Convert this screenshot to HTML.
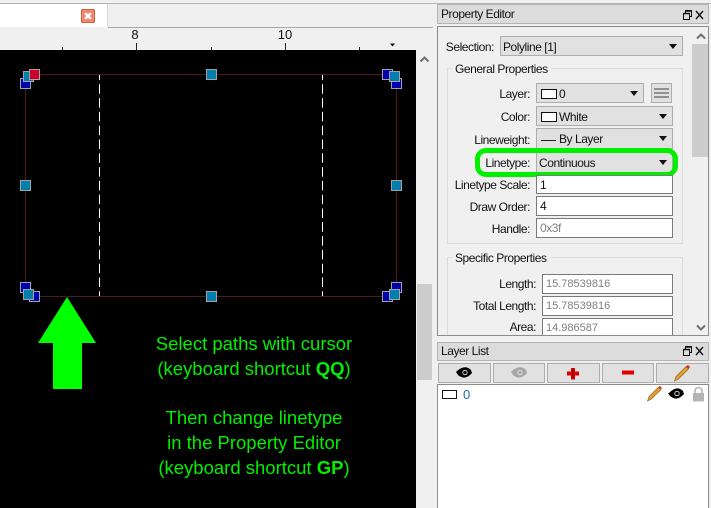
<!DOCTYPE html>
<html><head><meta charset="utf-8">
<style>
html,body{margin:0;padding:0;background:#f0f0f0;}
#r{position:relative;width:711px;height:508px;overflow:hidden;background:#f0f0f0;font-family:"Liberation Sans",sans-serif;font-size:12px;color:#111;letter-spacing:-.45px;}
#r div{position:absolute;box-sizing:border-box;white-space:nowrap;}
.lb{text-align:right;line-height:16px;height:16px;}
.cb{background:#e1e1e1;border:1px solid #adadad;line-height:20px;padding-left:2px;}
.cb:after{content:"";position:absolute;right:5px;top:7px;border-style:solid;border-color:#111 transparent transparent transparent;border-width:5px 4px 0 4px;}
.in{background:#fff;border:1px solid #7a7a7a;line-height:18px;padding-left:3px;}
.dis{color:#808080;}
.num{font-size:11px;letter-spacing:0;}
.sw{display:inline-block;width:14px;height:8px;border:1px solid #111;background:#fff;vertical-align:-1px;margin:0 2px 0 2px;box-sizing:content-box;}
.g{color:#00f000;font-size:18.5px;letter-spacing:0;line-height:25px;text-align:center;left:130px;width:248px;height:25px;}
.tb{top:363px;height:20px;background:#e1e1e1;border:1px solid #adadad;}
.grp{border:1px solid #dcdcdc;}
.gl{background:#f0f0f0;padding:0 3px;line-height:14px;}
</style></head><body>
<div id="r">
<div style="left:0;top:3px;width:711px;height:1px;background:#b4b4b4"></div>
<div style="left:0;top:4px;width:108px;height:23px;background:#fff;border-right:1px solid #d8d8d8"></div>
<div style="left:108px;top:27px;width:325px;height:1px;background:#a8a8a8"></div>
<svg style="position:absolute;left:81px;top:9px" width="14" height="14" viewBox="0 0 14 14"><rect x=".5" y=".5" width="13" height="13" rx="1" fill="#ec8a6e" stroke="#d9603f"/><path d="M4.200 4.200 9.800 9.800M9.800 4.200 4.200 9.800" stroke="#fff" stroke-width="2.400"/></svg>
<div style="left:125px;top:27px;width:20px;height:16px;text-align:center;font-size:13px;line-height:16px;letter-spacing:0">8</div>
<div style="left:270px;top:27px;width:30px;height:16px;text-align:center;font-size:13px;line-height:16px;letter-spacing:0">10</div>
<div style="left:0;top:50px;width:416px;height:458px;background:#000"></div>
<svg style="position:absolute;left:0;top:0" width="417" height="508">
<path d="M62.500 47V50M136.500 43V50M211.500 47V50M285.500 43V50M359.500 47V50" stroke="#222" fill="none"/>
<path d="M390 43.500h5l-2.500 3z" fill="#111"/>
<rect x="25.500" y="74.500" width="371" height="222" fill="none" stroke="#521a1e"/>
<path d="M99.500 75V296M322.500 75V296" stroke="#fff" stroke-dasharray="9.500 4.300" stroke-dashoffset="4.500" fill="none"/>
<path d="M67 297 96 343H82V389H53V343H38Z" fill="#00ff00"/>
<g stroke="#a3a3a3" stroke-width="1">
<g fill="#0000b0">
<rect x="20.500" y="78.500" width="10" height="10"/>
<rect x="382.500" y="69.500" width="10" height="10"/>
<rect x="391.500" y="78.500" width="10" height="10"/>
<rect x="20.500" y="282.500" width="10" height="10"/>
<rect x="29.500" y="291.500" width="10" height="10"/>
<rect x="382.500" y="291.500" width="10" height="10"/>
<rect x="391.500" y="282.500" width="10" height="10"/>
</g>
<g fill="#007fae">
<rect x="206.500" y="69.500" width="10" height="10"/>
<rect x="20.500" y="180.500" width="10" height="10"/>
<rect x="391.500" y="180.500" width="10" height="10"/>
<rect x="206.500" y="291.500" width="10" height="10"/>
<rect x="23.500" y="71.500" width="10" height="10"/>
<rect x="389.500" y="71.500" width="10" height="10"/>
<rect x="23.500" y="289.500" width="10" height="10"/>
<rect x="389.500" y="289.500" width="10" height="10"/>
</g>
<rect x="29.500" y="69.500" width="10" height="10" fill="#c8002c"/>
</g>
</svg>
<div class="g" style="top:331px">Select paths with cursor</div>
<div class="g" style="top:356px">(keyboard shortcut <b>QQ</b>)</div>
<div class="g" style="top:405px">Then change linetype</div>
<div class="g" style="top:430px">in the Property Editor</div>
<div class="g" style="top:455px">(keyboard shortcut <b>GP</b>)</div>
<svg style="position:absolute;left:419px;top:56px" width="11" height="7"><path d="M1.500 5.500 5.500 1.500 9.500 5.500" fill="none" stroke="#707070" stroke-width="2"/></svg>
<div style="left:417px;top:284px;width:15px;height:96px;background:#cdcdcd"></div>
<div style="left:437px;top:4px;width:272px;height:20px;background:#dcdcdc;border:1px solid #b5b5b5;padding-left:3px;line-height:18px">Property Editor</div>
<svg style="position:absolute;left:681px;top:10px" width="24" height="10"><path d="M2.500 3.500h6v6h-6zM4.500 3V.5h6v6H9" fill="none" stroke="#111"/><path d="M2.500 3.500h6M4.500 1h6" stroke="#111" stroke-width="1.500"/><path d="M15 1 22 9M22 1 15 9" stroke="#111" stroke-width="1.400"/></svg>
<div style="left:437px;top:26px;width:272px;height:310px;border:1px solid #8c8c8c;background:#f0f0f0"></div>
<div style="left:692px;top:27px;width:16px;height:308px;background:#f0f0f0"></div>
<svg style="position:absolute;left:695px;top:33px" width="12" height="7"><path d="M2 5.500 6 1.500 10 5.500" fill="none" stroke="#707070" stroke-width="2"/></svg>
<div style="left:692px;top:44px;width:16px;height:113px;background:#cdcdcd"></div>
<svg style="position:absolute;left:695px;top:324px" width="12" height="7"><path d="M2 1.500 6 5.500 10 1.500" fill="none" stroke="#707070" stroke-width="2"/></svg>
<div class="lb" style="left:440px;top:39px;width:54px">Selection:</div>
<div class="cb" style="left:500px;top:36px;width:183px;height:20px;">Polyline [1]</div>
<div class="grp" style="left:447px;top:68px;width:236px;height:176px"></div>
<div class="gl" style="left:452px;top:62px">General Properties</div>
<div class="lb" style="left:450px;top:86px;width:80px">Layer:</div>
<div class="cb" style="left:536px;top:83px;width:108px;height:20px"><span class="sw"></span>0</div>
<div style="left:651px;top:83px;width:21px;height:20px;background:#e1e1e1;border:1px solid #adadad"></div>
<div style="left:654px;top:88px;width:15px;height:2px;background:#909090"></div>
<div style="left:654px;top:92px;width:15px;height:2px;background:#909090"></div>
<div style="left:654px;top:96px;width:15px;height:2px;background:#909090"></div>
<div class="lb" style="left:450px;top:109px;width:80px">Color:</div>
<div class="cb" style="left:536px;top:106px;width:137px;height:20px"><span class="sw"></span>White</div>
<div class="lb" style="left:450px;top:132px;width:80px">Lineweight:</div>
<div class="cb" style="left:536px;top:128px;width:137px;height:21px;padding-left:22px;">By Layer</div>
<div style="left:541px;top:140px;width:15px;height:1px;background:#222"></div>
<div class="lb" style="left:450px;top:155px;width:80px">Linetype:</div>
<div class="cb" style="left:536px;top:152px;width:137px;height:21px">Continuous</div>
<div style="left:475px;top:148px;width:203px;height:29px;border:5px solid #00f000;border-radius:11px"></div>
<div class="lb" style="left:450px;top:177px;width:80px">Linetype Scale:</div>
<div class="in" style="left:536px;top:175px;width:137px;height:19px">1</div>
<div class="lb" style="left:450px;top:199px;width:80px">Draw Order:</div>
<div class="in" style="left:536px;top:196px;width:137px;height:20px">4</div>
<div class="lb" style="left:450px;top:221px;width:80px">Handle:</div>
<div class="in dis" style="left:536px;top:218px;width:137px;height:20px">0x3f</div>
<div class="grp" style="left:447px;top:257px;width:236px;height:78px;border-bottom:0"></div>
<div class="gl" style="left:452px;top:251px">Specific Properties</div>
<div class="lb" style="left:450px;top:276px;width:86px">Length:</div>
<div class="in dis num" style="left:542px;top:274px;width:131px;height:20px">15.78539816</div>
<div class="lb" style="left:450px;top:298px;width:86px">Total Length:</div>
<div class="in dis num" style="left:542px;top:296px;width:131px;height:20px">15.78539816</div>
<div class="lb" style="left:450px;top:319px;width:86px">Area:</div>
<div class="in dis num" style="left:542px;top:318px;width:131px;height:17px;border-bottom:0">14.986587</div>
<div style="left:437px;top:335px;width:272px;height:1px;background:#8c8c8c"></div>
<div style="left:437px;top:342px;width:272px;height:19px;background:#dcdcdc;border:1px solid #b5b5b5;padding-left:3px;line-height:17px">Layer List</div>
<svg style="position:absolute;left:681px;top:346px" width="24" height="10"><path d="M2.500 3.500h6v6h-6zM4.500 3V.5h6v6H9" fill="none" stroke="#111"/><path d="M2.500 3.500h6M4.500 1h6" stroke="#111" stroke-width="1.500"/><path d="M15 1 22 9M22 1 15 9" stroke="#111" stroke-width="1.400"/></svg>
<div class="tb" style="left:438px;width:53px"></div>
<div class="tb" style="left:493px;width:52px"></div>
<div class="tb" style="left:547px;width:53px"></div>
<div class="tb" style="left:602px;width:52px"></div>
<div class="tb" style="left:656px;width:53px"></div>
<svg style="position:absolute;left:0;top:0" width="711" height="508">
<path d="M457 371Q465 364 471 370L472 373Q465 381 458 375L456 372Z" fill="#000"/><circle cx="465" cy="372.500" r="2.200" fill="#000" stroke="#e8e8e8" stroke-width=".8"/>
<path d="M512 371Q520 364 526 370L527 373Q520 381 513 375L511 372Z" fill="#a6a6a6"/><circle cx="520" cy="372.500" r="2.200" fill="#a6a6a6" stroke="#e8e8e8" stroke-width=".8"/>
<path d="M567 373.500h12" stroke="#e00000" stroke-width="4"/><path d="M573 368v11.500" stroke="#e00000" stroke-width="4"/><path d="M573 369v9" stroke="#600000" stroke-width="1"/>
<path d="M622 372.500h12" stroke="#e00000" stroke-width="4"/>
<path d="M674.500 381l1.500-4.500 10-10 2.500 2.500-10 10z" fill="#e0a030" stroke="#8a5a20" stroke-width=".6"/><path d="M686 366.500l2-1.500 2 2-1.500 2z" fill="#d03020"/>
</svg>
<div style="left:437px;top:384px;width:272px;height:124px;background:#fff;border:1px solid #8c8c8c;border-bottom:0"></div>
<div style="left:442px;top:390px;width:15px;height:9px;border:1px solid #111;background:#fff"></div>
<div style="left:463px;top:387px;height:16px;line-height:16px;font-size:13px;color:#1a6ec0">0</div>
<svg style="position:absolute;left:0;top:0" width="711" height="508">
<path d="M647.500 401l1.500-4.500 9.500-9.500 2.500 2.500-9.500 9.500z" fill="#e0a030" stroke="#8a5a20" stroke-width=".6"/><path d="M658.500 387l1.500-1 2 2-1.500 1.500z" fill="#d03020"/>
<path d="M669 393Q677 385 683 391L684 394Q677 402 670 396L668 393Z" fill="#000"/><circle cx="677" cy="393.500" r="2.200" fill="#000" stroke="#e8e8e8" stroke-width=".8"/>
<rect x="693" y="393" width="11" height="8.500" fill="#b5b5b5"/><path d="M695 393.500v-2.500a3.500 3.500 0 0 1 7 0v2.500" fill="none" stroke="#b5b5b5" stroke-width="1.600"/>
</svg>
</div>
</body></html>
